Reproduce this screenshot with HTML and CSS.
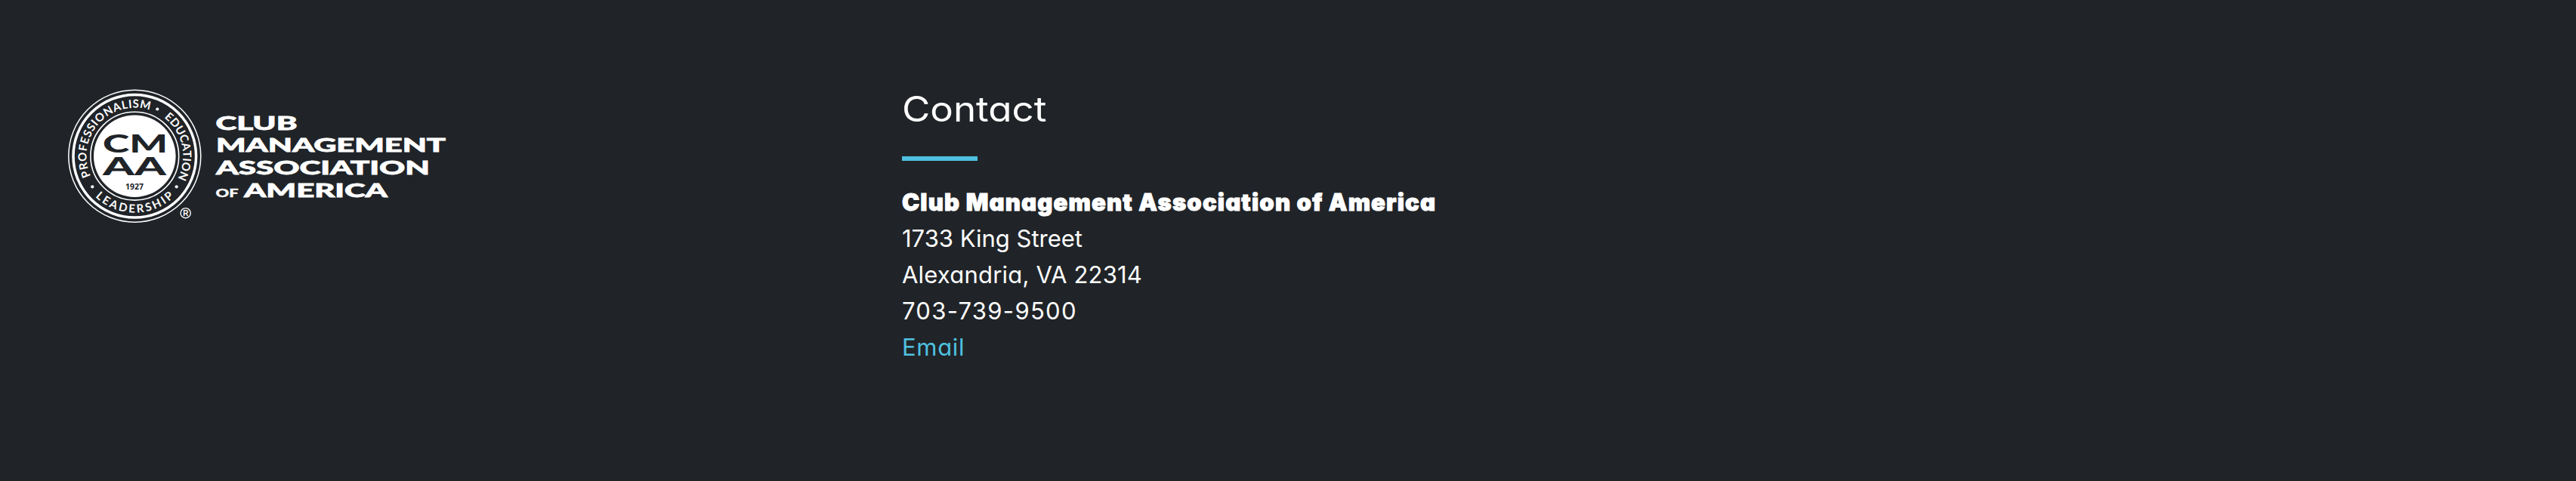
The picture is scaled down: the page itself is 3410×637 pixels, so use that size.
FILE: index.html
```html
<!DOCTYPE html>
<html lang="en">
<head>
<meta charset="utf-8">
<title>Club Management Association of America</title>
<link rel="stylesheet" href="styles.css">
</head>
<body>
<footer class="footer">
  <a class="brand">
    <svg class="logo" width="510" height="190" viewBox="85 112 510 190" role="img" aria-label="Club Management Association of America">
      <defs>
        <path id="arc-top" d="M 178.3 270.7 A 64 64 0 1 1 178.4 270.7"/>
        <path id="arc-bottom" d="M 103.3 206.7 A 75 75 0 0 0 253.3 206.7"/>
      </defs>
      <g class="ring">
        <circle cx="178.3" cy="206.7" r="87.5" stroke-width="1.5"/>
        <circle cx="178.3" cy="206.7" r="81.3" stroke-width="3.5"/>
        <circle cx="178.3" cy="206.7" r="58.4" stroke-width="1.6"/>
      </g>
      <circle class="white" cx="178.3" cy="206.7" r="54.3"/>
      <g class="ring-text">
        <text><textPath href="#arc-top" startOffset="73" textLength="148">PROFESSIONALISM</textPath></text>
        <text><textPath href="#arc-top" startOffset="242" textLength="90">EDUCATION</textPath></text>
        <text><textPath href="#arc-bottom" startOffset="60" textLength="115">LEADERSHIP</textPath></text>
      </g>
      <g class="white">
        <circle cx="208.3" cy="144.5" r="2.1"/>
        <circle cx="122.3" cy="247.3" r="2.1"/>
        <circle cx="233.7" cy="247.3" r="2.1"/>
      </g>
      <g class="initials">
        <text x="136" y="202" textLength="86" lengthAdjust="spacingAndGlyphs">CM</text>
        <text x="136" y="232.3" textLength="84" lengthAdjust="spacingAndGlyphs">AA</text>
        <text class="year" x="166" y="250.8" textLength="24" lengthAdjust="spacingAndGlyphs">1927</text>
      </g>
      <circle class="mark" cx="245.7" cy="282.2" r="6.6"/>
      <text class="mark-r" x="242.2" y="285.9">R</text>
      <g class="wordmark">
        <text x="285.5" y="171.7" textLength="108" lengthAdjust="spacingAndGlyphs">CLUB</text>
        <text x="286" y="201" textLength="304" lengthAdjust="spacingAndGlyphs">MANAGEMENT</text>
        <text x="286" y="231" textLength="283" lengthAdjust="spacingAndGlyphs">ASSOCIATION</text>
        <text class="of" x="285.5" y="260.5" textLength="30" lengthAdjust="spacingAndGlyphs">OF</text>
        <text x="323" y="260.5" textLength="190" lengthAdjust="spacingAndGlyphs">AMERICA</text>
      </g>
    </svg>
  </a>
  <section class="contact">
    <h2 class="title">Contact</h2>
    <div class="rule"></div>
    <address class="address">
      <strong class="org">Club Management Association of America</strong>
      <span class="street">1733 King Street</span>
      <span class="city">Alexandria, VA 22314</span>
      <span class="phone">703-739-9500</span>
      <a class="email">Email</a>
    </address>
  </section>
</footer>
</body>
</html>
```
FILE: styles.css
```css
body { margin: 0; background: #202428; }
.footer {
  box-sizing: border-box;
  height: 637px;
  padding: 112px 85px 0;
  display: grid;
  grid-template-columns: 1109px 1fr;
  background: #202428;
  color: #fff;
  font-family: Inter, "Liberation Sans", sans-serif;
  font-feature-settings: "cv11";
}
.logo { display: block; }
.white { fill: #fff; }
.ring { fill: none; stroke: #fff; }
.ring-text { fill: #fff; font: 700 15px Lato, sans-serif; }
.initials { fill: #202428; font: 900 33px Lato, sans-serif; }
.year { font: 700 10.5px "Open Sans", sans-serif; }
.mark { fill: none; stroke: #fff; stroke-width: 1.4; }
.mark-r { fill: #fff; font: 700 10px "Liberation Sans", sans-serif; }
.wordmark { fill: #fff; stroke: #fff; stroke-width: 0.8; font: 900 25.5px Lato, sans-serif; }
.of { font-size: 14.5px; stroke-width: 0.3; }
.title {
  width: max-content;
  margin: 0;
  height: 95px;
  line-height: 65px;
  font-size: 46px;
  font-weight: 400;
  transform: scaleX(1.11);
  transform-origin: 0 0;
}
.rule { width: 100px; height: 6px; background: #4fc1e0; }
.address { display: flex; flex-direction: column; margin-top: 31px; font-style: normal; font-size: 31px; line-height: 48px; white-space: nowrap; }
.org { font-weight: 900; letter-spacing: 1.2px; -webkit-text-stroke: 1px #fff; }
.city { letter-spacing: 0.2px; }
.phone { letter-spacing: 1.3px; }
.email { color: #4fc1e0; letter-spacing: 0.7px; font-weight: 400; }
```
